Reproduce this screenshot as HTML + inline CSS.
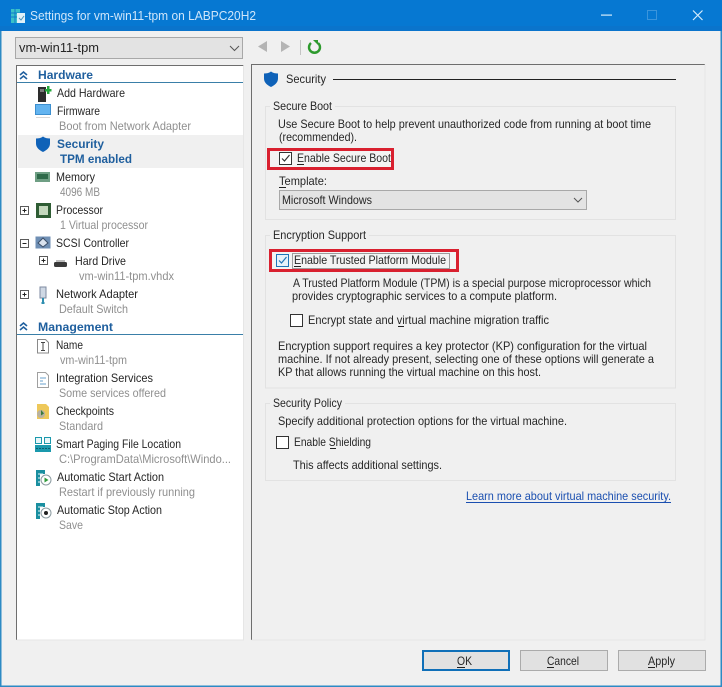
<!DOCTYPE html>
<html lang="en"><head><meta charset="utf-8"><title>Settings for vm-win11-tpm on LABPC20H2</title>
<style>
html,body{margin:0;padding:0;background:#f0f0f0;width:722px;height:687px;overflow:hidden}
svg{display:block}
text{font-family:"Liberation Sans",sans-serif;font-size:12px;fill:#262626}
.g{fill:#8f8f8f}
.b{font-weight:bold;fill:#1f5f9e}
.t{fill:#cfe6fa;font-size:12.5px}
.l{stroke:#e2e2e2;fill:none}
.u{stroke:#222;stroke-width:1}
</style></head><body>
<svg width="722" height="687" viewBox="0 0 722 687" xmlns="http://www.w3.org/2000/svg">
<rect width="722" height="687" fill="#f0f0f0"/>
<!-- window frame -->
<rect x="0" y="0" width="722" height="31" fill="#0678d2"/>
<rect x="0" y="26" width="722" height="5" fill="#0a74cc"/>
<rect x="0" y="31" width="1.5" height="656" fill="#2d8ac4"/>
<rect x="720.5" y="31" width="1.5" height="656" fill="#2d8ac4"/>
<rect x="0" y="685.5" width="722" height="1.5" fill="#2d8ac4"/>
<!-- title icon -->
<rect x="11" y="9" width="9" height="14" fill="#3ac0c8"/>
<path d="M11 13h9M11 17h9M15 9v14" stroke="#0d7cc8" stroke-width="1"/>
<rect x="17" y="13" width="8" height="10" fill="#dff0f8"/>
<path d="M19 18l2 2 3-4" stroke="#4a90b8" fill="none"/>
<text x="30" y="20" class="t" textLength="226" lengthAdjust="spacingAndGlyphs">Settings for vm-win11-tpm on LABPC20H2</text>
<!-- caption buttons -->
<rect x="601" y="14.5" width="11" height="1.2" fill="#d5ecfb"/>
<rect x="647.5" y="10.5" width="9" height="9" fill="none" stroke="#3b95dc"/>
<path d="M693 10.5l9.5 9.5M702.5 10.5L693 20" stroke="#d5ecfb" stroke-width="1.2"/>
<!-- vm combo -->
<rect x="15.5" y="37.5" width="227" height="21" fill="#e3e3e3" stroke="#a8a8a8"/>
<text x="19" y="52" textLength="80" lengthAdjust="spacingAndGlyphs" style="font-size:13px">vm-win11-tpm</text>
<path d="M230 46l4.500 4.500 4.500-4.500" fill="none" stroke="#555"/>
<!-- nav -->
<path d="M267 41v11l-9-5.500z" fill="#b4b4b4"/>
<path d="M281 41v11l9-5.500z" fill="#b4b4b4"/>
<rect x="300" y="40" width="1" height="15" fill="#c4c4c4"/>
<path d="M311 43a5.500 5.500 0 1 0 7 0" fill="none" stroke="#2d9a2d" stroke-width="2.400"/>
<path d="M313 40h5v5z" fill="#2d9a2d"/>
<!-- left list -->
<rect x="16.500" y="65.500" width="227" height="574" fill="#fff"/>
<path d="M16.500 640V65.500H243.500" fill="none" stroke="#6e6e6e"/>
<path d="M243.500 65.500V640H16.500" fill="none" stroke="#e6e6e6"/>
<rect x="18" y="135" width="225" height="33" fill="#f0f0f0"/>
<path d="M20 75l3.500-3 3.500 3M20 79l3.500-3 3.500 3" fill="none" stroke="#1f5f9e" stroke-width="1.600"/>
<text x="38" y="79" class="b" textLength="55" lengthAdjust="spacingAndGlyphs">Hardware</text>
<rect x="17" y="82" width="226" height="1" fill="#3a7fa8"/>
<path d="M20 326l3.500-3 3.500 3M20 330l3.500-3 3.500 3" fill="none" stroke="#1f5f9e" stroke-width="1.600"/>
<text x="38" y="331" class="b" textLength="75" lengthAdjust="spacingAndGlyphs">Management</text>
<rect x="17" y="334" width="226" height="1" fill="#3a7fa8"/>
<!-- list texts -->
<text x="57" y="97" textLength="68" lengthAdjust="spacingAndGlyphs">Add Hardware</text>
<text x="57" y="115" textLength="43" lengthAdjust="spacingAndGlyphs">Firmware</text>
<text x="59" y="130" class="g" textLength="132" lengthAdjust="spacingAndGlyphs">Boot from Network Adapter</text>
<text x="57" y="148" class="b" textLength="47" lengthAdjust="spacingAndGlyphs">Security</text>
<text x="60" y="163" class="b" textLength="72" lengthAdjust="spacingAndGlyphs">TPM enabled</text>
<text x="56" y="181" textLength="39" lengthAdjust="spacingAndGlyphs">Memory</text>
<text x="60" y="196" class="g" textLength="40" lengthAdjust="spacingAndGlyphs">4096 MB</text>
<text x="56" y="214" textLength="47" lengthAdjust="spacingAndGlyphs">Processor</text>
<text x="60" y="229" class="g" textLength="88" lengthAdjust="spacingAndGlyphs">1 Virtual processor</text>
<text x="56" y="247" textLength="73" lengthAdjust="spacingAndGlyphs">SCSI Controller</text>
<text x="75" y="265" textLength="51" lengthAdjust="spacingAndGlyphs">Hard Drive</text>
<text x="79" y="280" class="g" textLength="95" lengthAdjust="spacingAndGlyphs">vm-win11-tpm.vhdx</text>
<text x="56" y="298" textLength="82" lengthAdjust="spacingAndGlyphs">Network Adapter</text>
<text x="59" y="313" class="g" textLength="69" lengthAdjust="spacingAndGlyphs">Default Switch</text>
<text x="56" y="349" textLength="27" lengthAdjust="spacingAndGlyphs">Name</text>
<text x="60" y="364" class="g" textLength="67" lengthAdjust="spacingAndGlyphs">vm-win11-tpm</text>
<text x="56" y="382" textLength="97" lengthAdjust="spacingAndGlyphs">Integration Services</text>
<text x="59" y="397" class="g" textLength="107" lengthAdjust="spacingAndGlyphs">Some services offered</text>
<text x="56" y="415" textLength="58" lengthAdjust="spacingAndGlyphs">Checkpoints</text>
<text x="59" y="430" class="g" textLength="44" lengthAdjust="spacingAndGlyphs">Standard</text>
<text x="56" y="448" textLength="125" lengthAdjust="spacingAndGlyphs">Smart Paging File Location</text>
<text x="59" y="463" class="g" textLength="172" lengthAdjust="spacingAndGlyphs">C:\ProgramData\Microsoft\Windo...</text>
<text x="57" y="481" textLength="107" lengthAdjust="spacingAndGlyphs">Automatic Start Action</text>
<text x="59" y="496" class="g" textLength="136" lengthAdjust="spacingAndGlyphs">Restart if previously running</text>
<text x="57" y="514" textLength="105" lengthAdjust="spacingAndGlyphs">Automatic Stop Action</text>
<text x="59" y="529" class="g" textLength="24" lengthAdjust="spacingAndGlyphs">Save</text>
<!-- list icons -->
<rect x="38" y="87" width="8" height="15" fill="#2d2d2d"/><rect x="40" y="89" width="4" height="3" fill="#7a7a7a"/>
<path d="M45 89h2v-3h2.500v3h2v2.500h-2v2.500h-2.500v-2.500h-2z" fill="#25a83c"/>
<rect x="35.500" y="104.500" width="15" height="10" fill="#63b4f0" stroke="#3d8fcf"/><rect x="36" y="117" width="14" height="1" fill="#d8d8d8"/>
<path d="M43 136.500c2 1.500 4.500 2 7 2v5c0 4-3 6.500-7 8.500-4-2-7-4.500-7-8.500v-5c2.500 0 5-.5 7-2z" fill="#0f62b8"/>
<rect x="35" y="172" width="15" height="10" fill="#6f9f84"/><rect x="37" y="174" width="11" height="5" fill="#2f6a4a"/>
<rect x="36" y="203" width="15" height="15" fill="#2f5d34"/><rect x="39" y="206" width="9" height="9" fill="#c4d8bd"/>
<rect x="35.500" y="236.500" width="15" height="12" fill="#6f8fb4"/><path d="M38 243l5-5 5 5-5 4z" fill="#d9e2ee" stroke="#3a4e68"/>
<rect x="54" y="262" width="13" height="5" rx="1.500" fill="#3a3a3a"/><rect x="56" y="260" width="9" height="2" fill="#bdbdbd"/>
<rect x="40" y="287" width="6" height="11" fill="#cfd8e4" stroke="#7d8aa0"/><rect x="42" y="298" width="2" height="5" fill="#2f8fb0"/><rect x="41.500" y="302" width="3" height="2" fill="#2f8fb0"/>
<!-- expanders -->
<g fill="#fff" stroke="#5a5a5a">
<rect x="20.500" y="206.500" width="8" height="8"/><rect x="20.500" y="239.500" width="8" height="8"/><rect x="39.500" y="256.500" width="8" height="8"/><rect x="20.500" y="290.500" width="8" height="8"/>
</g>
<path d="M22.500 210.500h4M24.500 208.500v4M22.500 243.500h4M41.500 260.500h4M43.500 258.500v4M22.500 294.500h4M24.500 292.500v4" stroke="#222"/>
<!-- management icons -->
<path d="M37.500 339.500h8l3 3v10.500h-11z" fill="#fff" stroke="#8a8a8a"/><path d="M41 342.500h4M41 350.500h4M43 342.500v8" stroke="#444"/>
<path d="M37.500 372.500h8l3 3v12h-11z" fill="#fff" stroke="#a0a0a0"/><path d="M40 378h6M40 381h3M40 384h6" stroke="#6aa0cc"/>
<path d="M37 404h9l3 3v12H37z" fill="#eec85a"/><circle cx="41" cy="414" r="4" fill="#b9b2a0"/><path d="M41 410l3 3.500-3 2z" fill="#3a7a3a"/>
<path d="M35.500 437.500h6v6h-6zM44.500 437.500h6v6h-6z" fill="#e8f6f8" stroke="#1a99ad"/>
<rect x="35" y="445" width="16" height="7" fill="#1a99ad"/>
<path d="M36 448.500h14" stroke="#0a5f70" stroke-dasharray="2 1"/>
<g fill="#1a8fa0"><path d="M36 470h9v4h-5v12h-4z"/><path d="M36 503h9v4h-5v12h-4z"/></g>
<path d="M38 474h5M38 478h2M38 482h2M38 507h5M38 511h2M38 515h2" stroke="#e8f6f8"/>
<circle cx="46" cy="480" r="5" fill="#fff" stroke="#8a9aa0"/><path d="M44.500 477.500v5l4-2.500z" fill="#2f9a3a"/>
<circle cx="46" cy="513" r="5" fill="#fff" stroke="#8a9aa0"/><circle cx="46" cy="513" r="2" fill="#222"/>
<!-- right panel -->
<path d="M251.500 640V64.500H705" fill="none" stroke="#6e6e6e"/>
<path d="M705 64.500V640H251.500" fill="none" stroke="#e6e6e6"/>
<path d="M271 71.500c2 1.500 4.500 2 7 2v5c0 4-3 6.500-7 8.500-4-2-7-4.500-7-8.500v-5c2.500 0 5-.5 7-2z" fill="#0f62b8"/>
<text x="286" y="83" textLength="40" lengthAdjust="spacingAndGlyphs">Security</text>
<rect x="333" y="79" width="343" height="1" fill="#222"/>
<!-- groups -->
<path class="l" d="M270 106.500h-4.500v113h410v-113H335"/>
<path class="l" d="M270 235.500h-4.500v152.500h410V235.500H369"/>
<path class="l" d="M270 403.500h-4.500v77h410v-77H345"/>
<text x="273" y="110" textLength="59" lengthAdjust="spacingAndGlyphs">Secure Boot</text>
<text x="278" y="128" textLength="373" lengthAdjust="spacingAndGlyphs">Use Secure Boot to help prevent unauthorized code from running at boot time</text>
<text x="279" y="141" textLength="78" lengthAdjust="spacingAndGlyphs">(recommended).</text>
<rect x="268.500" y="149.500" width="124" height="19" fill="#f3f3f3" stroke="#d9202f" stroke-width="3"/>
<rect x="279.500" y="152.500" width="12" height="12" fill="#fff" stroke="#333"/>
<path d="M282 158.500l2.500 2.500 5-6" fill="none" stroke="#333" stroke-width="1.200"/>
<text x="297" y="162" textLength="94" lengthAdjust="spacingAndGlyphs">Enable Secure Boot</text>
<path class="u" d="M297 164.500h7"/>
<text x="279" y="185" textLength="48" lengthAdjust="spacingAndGlyphs">Template:</text>
<path class="u" d="M279 187.500h7"/>
<rect x="279.500" y="190.500" width="307" height="19" fill="#e3e3e3" stroke="#a8a8a8"/>
<text x="282" y="204" textLength="90" lengthAdjust="spacingAndGlyphs">Microsoft Windows</text>
<path d="M574 198l4 4 4-4" fill="none" stroke="#555"/>
<text x="273" y="239" textLength="93" lengthAdjust="spacingAndGlyphs">Encryption Support</text>
<rect x="270.500" y="250.500" width="187" height="20" fill="#f3f3f3" stroke="#d9202f" stroke-width="3"/>
<rect x="276.500" y="254.500" width="12" height="12" fill="#e6f1fa" stroke="#1f74b8"/>
<path d="M279 260.500l2.500 2.500 5-6" fill="none" stroke="#1f74b8" stroke-width="1.200"/>
<rect x="292.500" y="253.500" width="157" height="15" fill="none" stroke="#444" stroke-dasharray="1 1"/>
<text x="294" y="264" textLength="152" lengthAdjust="spacingAndGlyphs">Enable Trusted Platform Module</text>
<path class="u" d="M294 266.500h7"/>
<text x="293" y="287" textLength="358" lengthAdjust="spacingAndGlyphs">A Trusted Platform Module (TPM) is a special purpose microprocessor which</text>
<text x="292" y="300" textLength="265" lengthAdjust="spacingAndGlyphs">provides cryptographic services to a compute platform.</text>
<rect x="290.500" y="314.500" width="12" height="12" fill="#fff" stroke="#333"/>
<text x="308" y="324" textLength="241" lengthAdjust="spacingAndGlyphs">Encrypt state and virtual machine migration traffic</text>
<path class="u" d="M398 326.500h6"/>
<text x="278" y="350" textLength="369" lengthAdjust="spacingAndGlyphs">Encryption support requires a key protector (KP) configuration for the virtual</text>
<text x="278" y="363" textLength="376" lengthAdjust="spacingAndGlyphs">machine. If not already present, selecting one of these options will generate a</text>
<text x="278" y="376" textLength="263" lengthAdjust="spacingAndGlyphs">KP that allows running the virtual machine on this host.</text>
<text x="273" y="407" textLength="69" lengthAdjust="spacingAndGlyphs">Security Policy</text>
<text x="278" y="425" textLength="289" lengthAdjust="spacingAndGlyphs">Specify additional protection options for the virtual machine.</text>
<rect x="276.500" y="436.500" width="12" height="12" fill="#fff" stroke="#333"/>
<text x="294" y="446" textLength="77" lengthAdjust="spacingAndGlyphs">Enable Shielding</text>
<path class="u" d="M330 448.500h6"/>
<text x="293" y="469" textLength="149" lengthAdjust="spacingAndGlyphs">This affects additional settings.</text>
<text x="466" y="500" textLength="205" lengthAdjust="spacingAndGlyphs" style="fill:#1a4fb0">Learn more about virtual machine security.</text>
<path d="M466 502.500h205" stroke="#1a4fb0"/>
<!-- buttons -->
<rect x="423" y="651" width="86" height="19" fill="#e1e1e1" stroke="#0f6fb8" stroke-width="2"/>
<rect x="520.500" y="650.500" width="87" height="20" fill="#e1e1e1" stroke="#ababab"/>
<rect x="618.500" y="650.500" width="87" height="20" fill="#e1e1e1" stroke="#ababab"/>
<text x="457" y="665" textLength="15" lengthAdjust="spacingAndGlyphs">OK</text>
<path class="u" d="M457 667.500h8"/>
<text x="547" y="665" textLength="32" lengthAdjust="spacingAndGlyphs">Cancel</text>
<path class="u" d="M547 667.500h7"/>
<text x="648" y="665" textLength="27" lengthAdjust="spacingAndGlyphs">Apply</text>
<path class="u" d="M648 667.500h7"/>
</svg>
</body></html>
